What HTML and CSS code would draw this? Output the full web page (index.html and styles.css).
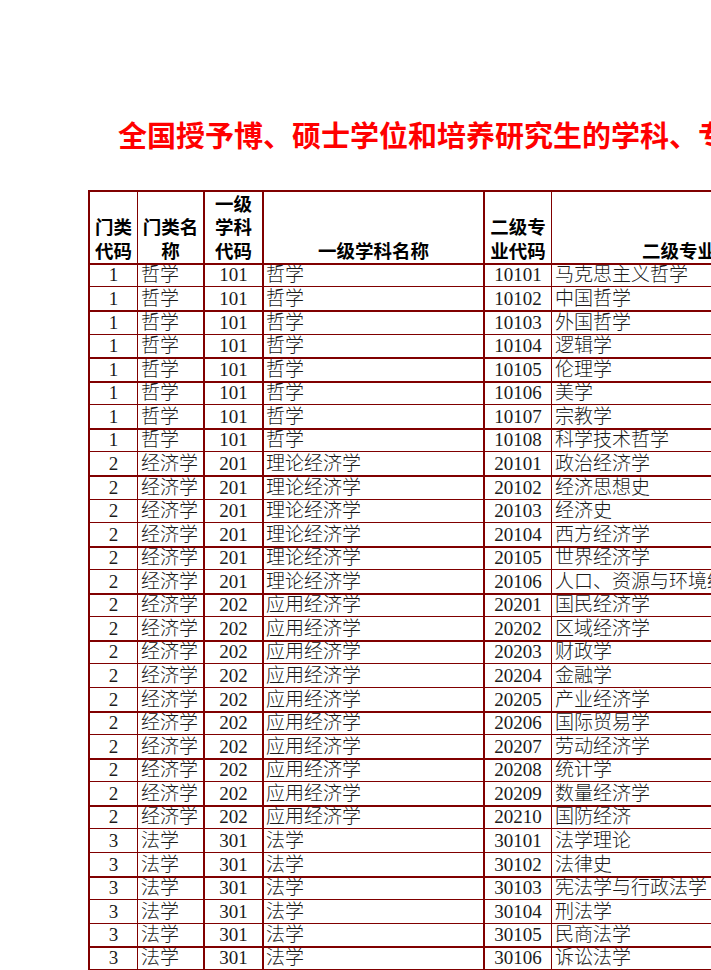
FILE: index.html
```html
<!DOCTYPE html>
<html lang="zh-CN">
<head>
<meta charset="utf-8">
<title>学科、专业目录</title>
<link rel="stylesheet" href="styles.css">
</head>
<body>
<div class="sheet">
  <h1 class="title">全国授予博、硕士学位和培养研究生的学科、专业目录</h1>
  <table class="grid">
    <colgroup>
      <col class="c1"><col class="c2"><col class="c3"><col class="c4"><col class="c5"><col class="c6">
    </colgroup>
    <thead>
      <tr class="head">
        <th class="k1">门类<br>代码</th>
        <th class="k2">门类名<br>称</th>
        <th class="k3">一级<br>学科<br>代码</th>
        <th class="k4">一级学科名称</th>
        <th class="k5">二级专<br>业代码</th>
        <th class="k6">二级专业名称</th>
      </tr>
    </thead>
    <tbody>
      <tr class="tk"><td class="k1">1</td><td class="k2">哲学</td><td class="k3">101</td><td class="k4">哲学</td><td class="k5">10101</td><td class="k6">马克思主义哲学</td></tr>
      <tr><td class="k1">1</td><td class="k2">哲学</td><td class="k3">101</td><td class="k4">哲学</td><td class="k5">10102</td><td class="k6">中国哲学</td></tr>
      <tr class="tk"><td class="k1">1</td><td class="k2">哲学</td><td class="k3">101</td><td class="k4">哲学</td><td class="k5">10103</td><td class="k6">外国哲学</td></tr>
      <tr><td class="k1">1</td><td class="k2">哲学</td><td class="k3">101</td><td class="k4">哲学</td><td class="k5">10104</td><td class="k6">逻辑学</td></tr>
      <tr class="tk"><td class="k1">1</td><td class="k2">哲学</td><td class="k3">101</td><td class="k4">哲学</td><td class="k5">10105</td><td class="k6">伦理学</td></tr>
      <tr class="tk"><td class="k1">1</td><td class="k2">哲学</td><td class="k3">101</td><td class="k4">哲学</td><td class="k5">10106</td><td class="k6">美学</td></tr>
      <tr><td class="k1">1</td><td class="k2">哲学</td><td class="k3">101</td><td class="k4">哲学</td><td class="k5">10107</td><td class="k6">宗教学</td></tr>
      <tr class="tk"><td class="k1">1</td><td class="k2">哲学</td><td class="k3">101</td><td class="k4">哲学</td><td class="k5">10108</td><td class="k6">科学技术哲学</td></tr>
      <tr><td class="k1">2</td><td class="k2">经济学</td><td class="k3">201</td><td class="k4">理论经济学</td><td class="k5">20101</td><td class="k6">政治经济学</td></tr>
      <tr class="tk"><td class="k1">2</td><td class="k2">经济学</td><td class="k3">201</td><td class="k4">理论经济学</td><td class="k5">20102</td><td class="k6">经济思想史</td></tr>
      <tr><td class="k1">2</td><td class="k2">经济学</td><td class="k3">201</td><td class="k4">理论经济学</td><td class="k5">20103</td><td class="k6">经济史</td></tr>
      <tr><td class="k1">2</td><td class="k2">经济学</td><td class="k3">201</td><td class="k4">理论经济学</td><td class="k5">20104</td><td class="k6">西方经济学</td></tr>
      <tr class="tk"><td class="k1">2</td><td class="k2">经济学</td><td class="k3">201</td><td class="k4">理论经济学</td><td class="k5">20105</td><td class="k6">世界经济学</td></tr>
      <tr><td class="k1">2</td><td class="k2">经济学</td><td class="k3">201</td><td class="k4">理论经济学</td><td class="k5">20106</td><td class="k6">人口、资源与环境经济学</td></tr>
      <tr class="tk"><td class="k1">2</td><td class="k2">经济学</td><td class="k3">202</td><td class="k4">应用经济学</td><td class="k5">20201</td><td class="k6">国民经济学</td></tr>
      <tr><td class="k1">2</td><td class="k2">经济学</td><td class="k3">202</td><td class="k4">应用经济学</td><td class="k5">20202</td><td class="k6">区域经济学</td></tr>
      <tr class="tk"><td class="k1">2</td><td class="k2">经济学</td><td class="k3">202</td><td class="k4">应用经济学</td><td class="k5">20203</td><td class="k6">财政学</td></tr>
      <tr><td class="k1">2</td><td class="k2">经济学</td><td class="k3">202</td><td class="k4">应用经济学</td><td class="k5">20204</td><td class="k6">金融学</td></tr>
      <tr><td class="k1">2</td><td class="k2">经济学</td><td class="k3">202</td><td class="k4">应用经济学</td><td class="k5">20205</td><td class="k6">产业经济学</td></tr>
      <tr class="tk"><td class="k1">2</td><td class="k2">经济学</td><td class="k3">202</td><td class="k4">应用经济学</td><td class="k5">20206</td><td class="k6">国际贸易学</td></tr>
      <tr><td class="k1">2</td><td class="k2">经济学</td><td class="k3">202</td><td class="k4">应用经济学</td><td class="k5">20207</td><td class="k6">劳动经济学</td></tr>
      <tr class="tk"><td class="k1">2</td><td class="k2">经济学</td><td class="k3">202</td><td class="k4">应用经济学</td><td class="k5">20208</td><td class="k6">统计学</td></tr>
      <tr><td class="k1">2</td><td class="k2">经济学</td><td class="k3">202</td><td class="k4">应用经济学</td><td class="k5">20209</td><td class="k6">数量经济学</td></tr>
      <tr class="tk"><td class="k1">2</td><td class="k2">经济学</td><td class="k3">202</td><td class="k4">应用经济学</td><td class="k5">20210</td><td class="k6">国防经济</td></tr>
      <tr><td class="k1">3</td><td class="k2">法学</td><td class="k3">301</td><td class="k4">法学</td><td class="k5">30101</td><td class="k6">法学理论</td></tr>
      <tr><td class="k1">3</td><td class="k2">法学</td><td class="k3">301</td><td class="k4">法学</td><td class="k5">30102</td><td class="k6">法律史</td></tr>
      <tr class="tk"><td class="k1">3</td><td class="k2">法学</td><td class="k3">301</td><td class="k4">法学</td><td class="k5">30103</td><td class="k6">宪法学与行政法学</td></tr>
      <tr><td class="k1">3</td><td class="k2">法学</td><td class="k3">301</td><td class="k4">法学</td><td class="k5">30104</td><td class="k6">刑法学</td></tr>
      <tr><td class="k1">3</td><td class="k2">法学</td><td class="k3">301</td><td class="k4">法学</td><td class="k5">30105</td><td class="k6">民商法学</td></tr>
      <tr class="tk last"><td class="k1">3</td><td class="k2">法学</td><td class="k3">301</td><td class="k4">法学</td><td class="k5">30106</td><td class="k6">诉讼法学</td></tr>
    </tbody>
  </table>
</div>
</body>
</html>
```
FILE: styles.css
```css
html, body {
  margin: 0;
  padding: 0;
  overflow: hidden;
  background: #ffffff;
}

.sheet {
  padding: 117px 0 0 88px;
  width: 756px;
}

.title {
  margin: 0 0 39px 0;
  width: 756px;
  text-align: center;
  font-family: "Noto Sans CJK SC", sans-serif;
  font-weight: 700;
  font-size: 29px;
  line-height: 34px;
  color: #ff0000;
  white-space: nowrap;
}

.grid {
  table-layout: fixed;
  width: 756px;
  border-collapse: separate;
  border-spacing: 0;
}

.c1 { width: 50px; }
.c2 { width: 67px; }
.c3 { width: 59px; }
.c4 { width: 221px; }
.c5 { width: 67px; }
.c6 { width: 292px; }

.grid th,
.grid td {
  box-sizing: border-box;
  padding: 0;
  border-right: 1px solid #800000;
  border-top: 1px solid #800000;
  vertical-align: bottom;
  white-space: nowrap;
  overflow: hidden;
}

.grid .k1 { border-left: 2px solid #800000; text-align: center; }
.grid .k2 { border-right-width: 2px; text-align: left; padding-left: 3px; }
.grid .k3 { border-right-width: 2px; text-align: center; }
.grid .k4 { border-right-width: 2px; text-align: left; padding-left: 2px; }
.grid .k5 { text-align: center; }
.grid .k6 { text-align: left; padding-left: 3px; }

.head { height: 72px; }

.head th {
  border-top-width: 2px;
  font-family: "Noto Sans CJK SC", sans-serif;
  font-weight: 700;
  font-size: 18.5px;
  line-height: 23.3px;
  color: #000;
  padding-bottom: 1px;
  text-align: center;
}

.head th.k2, .head th.k4, .head th.k6 { padding-left: 0; text-align: center; }

.grid tbody tr { height: 23.57px; }

.grid td {
  font-family: "Liberation Serif", "Noto Sans CJK SC", serif;
  font-weight: 300;
  font-size: 19px;
  line-height: 20px;
  color: #1a1a1a;
  padding-bottom: 1px;
}

.grid tr.tk td { border-top-width: 2px; }
.grid tr.last td { border-bottom: 1px solid #800000; }
```
